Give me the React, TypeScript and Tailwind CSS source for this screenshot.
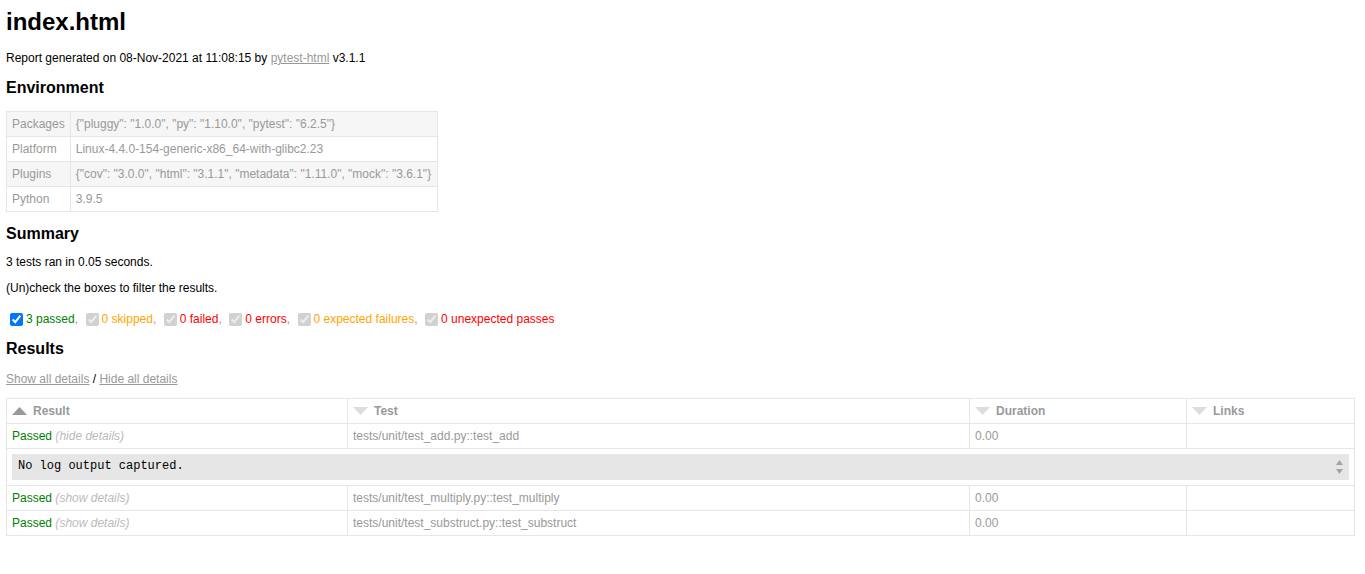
const envRows = [
  ["Packages", '{"pluggy": "1.0.0", "py": "1.10.0", "pytest": "6.2.5"}'],
  ["Platform", "Linux-4.4.0-154-generic-x86_64-with-glibc2.23"],
  ["Plugins", '{"cov": "3.0.0", "html": "3.1.1", "metadata": "1.11.0", "mock": "3.6.1"}'],
  ["Python", "3.9.5"],
];

const filters = [
  { label: "3 passed", color: "text-[#008000]", on: true },
  { label: "0 skipped", color: "text-[#ffa500]" },
  { label: "0 failed", color: "text-[#ff0000]" },
  { label: "0 errors", color: "text-[#ff0000]" },
  { label: "0 expected failures", color: "text-[#ffa500]" },
  { label: "0 unexpected passes", color: "text-[#ff0000]", last: true },
];

// sort arrow in table header
function Arrow({ up }: { up?: boolean }) {
  return (
    <svg width="15" height="8" viewBox="0 0 15 8" className="inline-block mr-[6px] align-[0px]">
      {up ? (
        <polygon points="0,8 7.5,0 15,8" fill="#999999" />
      ) : (
        <polygon points="0,0 7.5,8 15,0" fill="#dddddd" />
      )}
    </svg>
  );
}

function ResultRow({ test, open }: { test: string; open?: boolean }) {
  return (
    <tr>
      <td className="border border-[#e6e6e6] px-[5px] py-[5px]">
        <span className="text-[#008000]">Passed</span>
        <span className="italic text-[#bbbbbb]"> ({open ? "hide" : "show"} details)</span>
      </td>
      <td className="border border-[#e6e6e6] px-[5px] py-[5px]">{test}</td>
      <td className="border border-[#e6e6e6] px-[5px] py-[5px]">0.00</td>
      <td className="border border-[#e6e6e6] px-[5px] py-[5px]"></td>
    </tr>
  );
}

export default function App() {
  return (
    <div className="min-h-[574px] bg-white pl-[6px] pr-[11px] pt-[8px] font-['Liberation_Sans',Arial,sans-serif] text-[12px] leading-[14px] text-[#999999]">
      <h1 className="text-[24px] leading-[28px] font-bold text-black">index.html</h1>
      <p className="mt-[15px] text-black">
        Report generated on 08-Nov-2021 at 11:08:15 by{" "}
        <a className="text-[#999999] underline">pytest-html</a> v3.1.1
      </p>

      <h2 className="mt-[14px] text-[16px] leading-[18px] font-bold text-black">Environment</h2>
      <table className="mt-[14px] border-collapse">
        <tbody>
          {envRows.map(([k, v], i) => (
            <tr key={k} className={i % 2 === 0 ? "bg-[#f6f6f6]" : ""}>
              <td className="border border-[#e6e6e6] px-[5px] py-[5px]">{k}</td>
              <td className="border border-[#e6e6e6] px-[5px] py-[5px] w-[367px]">{v}</td>
            </tr>
          ))}
        </tbody>
      </table>

      <h2 className="mt-[13px] text-[16px] leading-[18px] font-bold text-black">Summary</h2>
      <p className="mt-[12px] text-black">3 tests ran in 0.05 seconds.</p>
      <p className="mt-[12px] text-black">(Un)check the boxes to filter the results.</p>
      <div className="mt-[14px] flex items-center h-[20px]">
        {filters.map((f) => (
          <span key={f.label} className="flex items-center">
            <input
              type="checkbox"
              checked
              readOnly
              disabled={!f.on}
              className="w-[13px] h-[13px] ml-[4px] mr-[3px] my-[3px]"
            />
            <span className={f.color}>{f.label}</span>
            {!f.last && <span className="text-[#999999] mr-[3.5px]">,</span>}
          </span>
        ))}
      </div>

      <h2 className="mt-[11px] text-[16px] leading-[18px] font-bold text-black">Results</h2>
      <p className="mt-[14px] text-black">
        <a className="text-[#999999] underline">Show all details</a> /{" "}
        <a className="text-[#999999] underline">Hide all details</a>
      </p>

      <table className="mt-[12px] w-full border-collapse table-fixed text-left">
        <colgroup>
          <col className="w-[341px]" />
          <col className="w-[622px]" />
          <col className="w-[217px]" />
          <col className="w-[168px]" />
        </colgroup>
        <thead>
          <tr>
            <th className="border border-[#e6e6e6] px-[5px] py-[5px] font-bold">
              <Arrow up />
              Result
            </th>
            <th className="border border-[#e6e6e6] px-[5px] py-[5px] font-bold">
              <Arrow />
              Test
            </th>
            <th className="border border-[#e6e6e6] px-[5px] py-[5px] font-bold">
              <Arrow />
              Duration
            </th>
            <th className="border border-[#e6e6e6] px-[5px] py-[5px] font-bold">
              <Arrow />
              Links
            </th>
          </tr>
        </thead>
        <tbody>
          <ResultRow test="tests/unit/test_add.py::test_add" open />
          <tr>
            <td colSpan={4} className="border border-[#e6e6e6] px-[5px] py-[5px]">
              <div className="flex h-[26px] bg-[#e6e6e6] text-black">
                <div className="flex-1 pl-[6px] pt-[5px] font-['Liberation_Mono','Courier_New',monospace] text-[12px] leading-[14px]">
                  No log output captured.
                </div>
                <div className="flex w-[16px] flex-col items-center justify-center gap-[4px] pr-[4px]">
                  <svg width="7" height="5" viewBox="0 0 7 5">
                    <polygon points="0,5 3.5,0 7,5" fill="#a3a3a3" />
                  </svg>
                  <svg width="7" height="5" viewBox="0 0 7 5">
                    <polygon points="0,0 3.5,5 7,0" fill="#a3a3a3" />
                  </svg>
                </div>
              </div>
            </td>
          </tr>
          <ResultRow test="tests/unit/test_multiply.py::test_multiply" />
          <ResultRow test="tests/unit/test_substruct.py::test_substruct" />
        </tbody>
      </table>
    </div>
  );
}
